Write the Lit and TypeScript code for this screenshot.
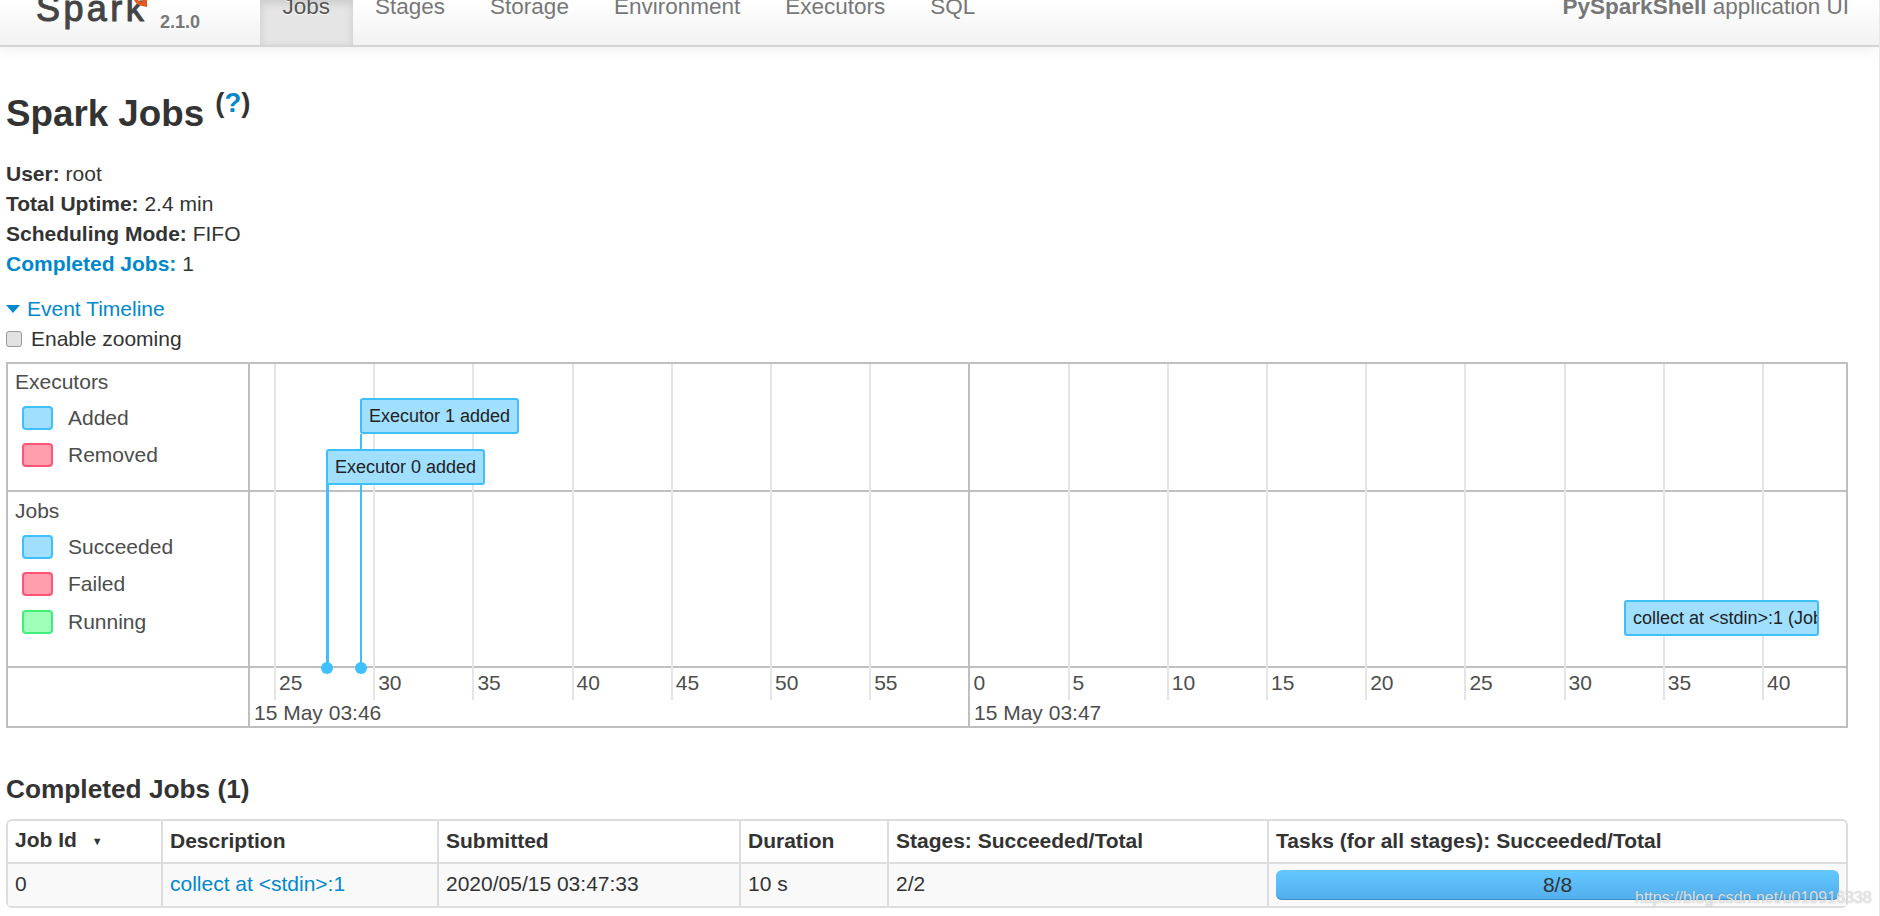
import { LitElement, html, css } from "lit";
import { customElement } from "lit/decorators.js";

const NAV = ["Jobs", "Stages", "Storage", "Environment", "Executors", "SQL"];
const SANS = css`"Liberation Sans", Arial, sans-serif`;

const TICKS = ["25","30","35","40","45","50","55","0","5","10","15","20","25","30","35","40"];

@customElement("app-root")
export class AppRoot extends LitElement {
  static styles = css`
    :host { display: block; position: relative; width: 1880px; height: 916px; overflow: hidden; background: #fff;
      font-family: ${SANS}; font-size: 21px; line-height: 30px; color: #333; }
    a { color: #0088cc; text-decoration: none; }

    .navbar { display: flex; height: 45px; width: 1879px; overflow: hidden; background: linear-gradient(#ffffff, #f2f2f2);
      border-bottom: 2px solid #d4d4d4; box-shadow: 0 2px 14px rgba(0,0,0,.08); }
    .logo { width: 260px; flex: none; display: flex; overflow: hidden; height: 45px; }
    .spark { margin: -12px 0 0 36px; width: 124px; flex: none; font-size: 36px; line-height: 42px; color: #444; letter-spacing: 3.4px; -webkit-text-stroke: 1px #444; position: relative; }
    .spark svg { position: absolute; left: 97px; top: 12px; }
    .version { margin-top: 7px; font-size: 18px; line-height: 30px; font-weight: bold; color: #777; text-shadow: 0 1px 0 #fff; }
    .nav { display: flex; flex: none; }
    .nav a { display: block; height: 45px; padding: 0 22.5px; color: #777; font-size: 22.5px; text-shadow: 0 1px 0 #fff; }
    .nav a span { display: block; line-height: 30px; margin-top: -8px; }
    .nav a.active { background: #e5e5e5; color: #555; box-shadow: inset 0 3px 8px rgba(0,0,0,.125); }
    .title { margin-left: auto; padding-right: 30px; color: #777; font-size: 22.5px; line-height: 30px; margin-top: -8px; white-space: nowrap; }

    main { padding: 0 32px 0 6px; }
    h3 { margin: 37px 0 0; font-size: 36.75px; line-height: 60px; font-weight: bold; color: #333; height: 62px; }
    h3 sup { font-size: 27.5px; font-weight: bold; line-height: 0; vertical-align: 14px; margin-left: 1px; }
    .stats { margin: 13px 0 0; padding: 0; list-style: none; }
    .stats strong { font-weight: bold; }
    .toggle { margin-top: 15px; display: flex; align-items: center; gap: 7px; }
    .toggle i { width: 0; height: 0; border-left: 7px solid transparent; border-right: 7px solid transparent; border-top: 8px solid #0088cc; }
    .zoom { display: flex; align-items: center; gap: 9px; }
    .check { width: 16px; height: 16px; box-sizing: border-box; border: 1px solid #999; border-radius: 3px; background: #e2e2e2; }

    .timeline { position: relative; margin-top: 8px; box-sizing: border-box; height: 366px; border: 2px solid #bfbfbf; display: grid;
      grid-template-columns: 242px 1fr; grid-template-rows: 128px 176px 1fr; color: #4d4d4d; }
    .group { border-right: 2px solid #bfbfbf; border-bottom: 2px solid #bfbfbf; padding-left: 7px; }
    .group.a { padding-top: 3px; }
    .group.b { padding-top: 4px; }
    .axis-left { border-right: 2px solid #bfbfbf; }
    .lane { border-bottom: 2px solid #bfbfbf; }
    .group-label { height: 32px; }
    .leg { display: flex; align-items: center; height: 37.5px; gap: 15px; margin-left: 7px; }
    .sw { width: 31px; height: 24px; box-sizing: border-box; border: 2px solid; border-radius: 4px; }
    .sw.blue { background: #a0dfff; border-color: #3ec0ff; }
    .sw.red { background: #ff9fae; border-color: #ff5475; }
    .sw.green { background: #a0ffb8; border-color: #40ef7a; }

    .vline { position: absolute; width: 2px; background: #e5e5e5; top: 0; height: 336px; }
    .vline.major { background: #bfbfbf; height: 362px; }
    .tick { position: absolute; top: 304px; color: #4d4d4d; }
    .date { position: absolute; top: 334px; color: #4d4d4d; }
    .stem { position: absolute; width: 2.5px; background: #3ec0ff; }
    .dot { position: absolute; width: 12px; height: 12px; border-radius: 50%; background: #3ec0ff; }
    .item { position: absolute; box-sizing: border-box; height: 36px; background: #a0dfff; border: 2.5px solid #3ec0ff; border-radius: 3px;
      font-size: 18px; line-height: 33px; padding: 0 7px; color: #222; white-space: nowrap; overflow: hidden; }

    h4 { margin: 46px 0 0; font-size: 26.25px; line-height: 30px; font-weight: bold; color: #333; }
    table { margin-top: 15px; width: 1842px; table-layout: fixed; border-collapse: separate; border-spacing: 0; border: 2px solid #ddd; border-radius: 6px; }
    th, td { box-sizing: border-box; text-align: left; padding: 0 7px 2px; border-left: 2px solid #ddd; font-size: 21px; line-height: 30px; }
    th:first-child, td:first-child { border-left: 0; }
    th { height: 43px; font-weight: bold; border-bottom: 2px solid #ddd; }
    td { height: 42px; background: #f9f9f9; }
    td.progress { padding-bottom: 0; }
    .sort { font-size: 11px; margin-left: 15px; vertical-align: 2px; color: #333; }
    .bar { height: 30px; line-height: 29px; border-radius: 6px; background: linear-gradient(#64c8ff, #52aeec); text-align: center; color: #333; box-shadow: inset 0 -1px 0 #3f8cc4; }
    .mark { position: absolute; left: 1635px; top: 884px; font-size: 16px; line-height: 28px; color: rgba(255,255,255,.75); text-shadow: 0 0 1px rgba(110,110,110,.7); white-space: nowrap; }
    .edge { position: absolute; left: 1879px; top: 0; width: 1px; height: 916px; background: #e8e8e8; }
  `;

  private leg(color: string, label: string) {
    return html`<div class="leg"><div class="sw ${color}"></div><span>${label}</span></div>`;
  }

  render() {
    // x of a tick line relative to the timeline's padding box (page x 8)
    const lx = (k: number) => 274 + 99.2 * k - 8;
    return html`
      <header class="navbar">
        <div class="logo">
          <div class="spark">Spark<svg width="16" height="9" viewBox="0 0 16 9"><path d="M1 0 C3 4 7 6 14 7 L14 0 L10 0 C10 2 7 2 5 0 Z" fill="#e25a1c"/></svg></div>
          <div class="version">2.1.0</div>
        </div>
        <nav class="nav">
          ${NAV.map((n, i) => html`<a class=${i === 0 ? "active" : ""}><span>${n}</span></a>`)}
        </nav>
        <div class="title"><strong>PySparkShell</strong> application UI</div>
      </header>
      <main>
        <h3>Spark Jobs <sup>(<a>?</a>)</sup></h3>
        <ul class="stats">
          <li><strong>User:</strong> root</li>
          <li><strong>Total Uptime:</strong> 2.4 min</li>
          <li><strong>Scheduling Mode:</strong> FIFO</li>
          <li><a><strong>Completed Jobs:</strong></a> 1</li>
        </ul>
        <a class="toggle"><i></i><span>Event Timeline</span></a>
        <div class="zoom"><span class="check"></span><span>Enable zooming</span></div>
        <section class="timeline">
          <div class="group a"><div class="group-label">Executors</div>${this.leg("blue", "Added")}${this.leg("red", "Removed")}</div>
          <div class="lane"></div>
          <div class="group b"><div class="group-label">Jobs</div>${this.leg("blue", "Succeeded")}${this.leg("red", "Failed")}${this.leg("green", "Running")}</div>
          <div class="lane"></div>
          <div class="axis-left"></div>
          <div></div>
          ${TICKS.map((t, k) => html`
            <div class="vline ${k === 7 ? "major" : ""}" style="left:${lx(k)}px"></div>
            <div class="tick" style="left:${lx(k) + 5}px">${t}</div>`)}
          <div class="date" style="left:246px">15 May 03:46</div>
          <div class="date" style="left:966px">15 May 03:47</div>
          <div class="stem" style="left:318px;top:120px;height:184px"></div>
          <div class="stem" style="left:352px;top:70px;height:234px;width:1.5px"></div>
          <div class="dot" style="left:313px;top:298px"></div>
          <div class="dot" style="left:347px;top:298px"></div>
          <div class="item" style="left:352px;top:34px;width:159px">Executor 1 added</div>
          <div class="item" style="left:318px;top:85px;width:159px">Executor 0 added</div>
          <div class="item" style="left:1616px;top:236px;width:195px">collect at &lt;stdin&gt;:1 (Job 0)</div>
        </section>
        <h4>Completed Jobs (1)</h4>
        <table>
          <colgroup><col style="width:153px"/><col style="width:276px"/><col style="width:302px"/><col style="width:148px"/><col style="width:380px"/><col/></colgroup>
          <thead><tr><th>Job Id<span class="sort">▼</span></th><th>Description</th><th>Submitted</th><th>Duration</th><th>Stages: Succeeded/Total</th><th>Tasks (for all stages): Succeeded/Total</th></tr></thead>
          <tbody><tr><td>0</td><td><a>collect at &lt;stdin&gt;:1</a></td><td>2020/05/15 03:47:33</td><td>10 s</td><td>2/2</td><td class="progress"><div class="bar">8/8</div></td></tr></tbody>
        </table>
      </main>
      <div class="mark">https://blog.csdn.net/u010916338</div>
      <div class="edge"></div>
    `;
  }
}
